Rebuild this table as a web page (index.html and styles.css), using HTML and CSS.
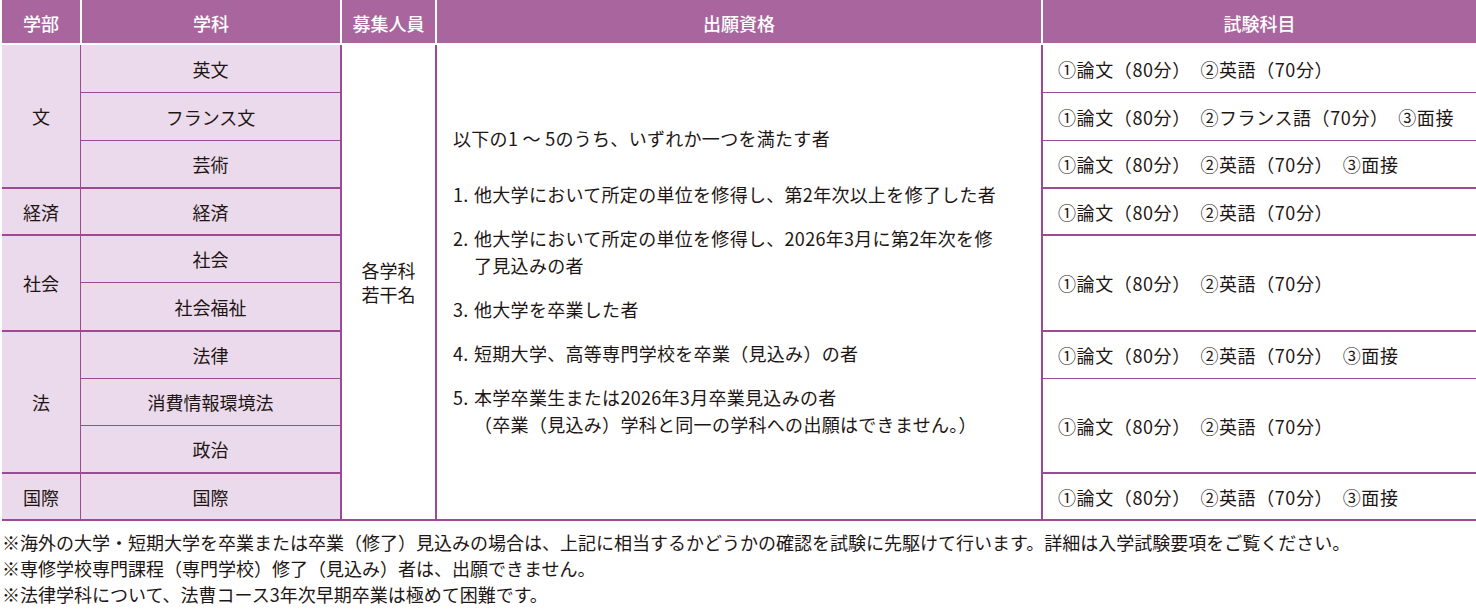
FILE: index.html
```html
<!DOCTYPE html>
<html lang="ja">
<head>
<meta charset="utf-8">
<title>出願資格</title>
<link rel="stylesheet" href="styles.css">
</head>
<body>
<div class="wrap">
  <div class="grid head">
    <div class="hc">学部</div>
    <div class="hc">学科</div>
    <div class="hc">募集人員</div>
    <div class="hc">出願資格</div>
    <div class="hc">試験科目</div>
  </div>
  <div class="grid tbody">
    <div class="cell c1 s3 grp">文</div>
    <div class="cell c2 thin">英文</div>
    <div class="cell c3 s10"><p class="quota">各学科<br>若干名</p></div>
    <div class="cell c4 s10">
      <div class="quals">
        <p class="intro">以下の1 ～ 5のうち、いずれか一つを満たす者</p>
        <p class="item"><span class="num">1.</span><span>他大学において所定の単位を修得し、第2年次以上を修了した者</span></p>
        <p class="item"><span class="num">2.</span><span>他大学において所定の単位を修得し、2026年3月に第2年次を修<br>了見込みの者</span></p>
        <p class="item"><span class="num">3.</span><span>他大学を卒業した者</span></p>
        <p class="item"><span class="num">4.</span><span>短期大学、高等専門学校を卒業（見込み）の者</span></p>
        <p class="item"><span class="num">5.</span><span>本学卒業生または2026年3月卒業見込みの者<br>（卒業（見込み）学科と同一の学科への出願はできません。）</span></p>
      </div>
    </div>
    <div class="cell c5 thin">①論文（80分）　②英語（70分）</div>

    <div class="cell c2 thin">フランス文</div>
    <div class="cell c5 thin">①論文（80分）　②フランス語（70分）　③面接</div>

    <div class="cell c2 grp">芸術</div>
    <div class="cell c5 grp">①論文（80分）　②英語（70分）　③面接</div>

    <div class="cell c1 grp">経済</div>
    <div class="cell c2 grp">経済</div>
    <div class="cell c5 grp">①論文（80分）　②英語（70分）</div>

    <div class="cell c1 s2 grp">社会</div>
    <div class="cell c2 thin">社会</div>
    <div class="cell c5 s2 grp">①論文（80分）　②英語（70分）</div>
    <div class="cell c2 grp">社会福祉</div>

    <div class="cell c1 s3 grp">法</div>
    <div class="cell c2 thin">法律</div>
    <div class="cell c5 thin">①論文（80分）　②英語（70分）　③面接</div>
    <div class="cell c2 thin">消費情報環境法</div>
    <div class="cell c5 s2 grp">①論文（80分）　②英語（70分）</div>
    <div class="cell c2 grp">政治</div>

    <div class="cell c1 grp">国際</div>
    <div class="cell c2 grp">国際</div>
    <div class="cell c5 grp">①論文（80分）　②英語（70分）　③面接</div>
  </div>
  <div class="notes">
    <p>※海外の大学・短期大学を卒業または卒業（修了）見込みの場合は、上記に相当するかどうかの確認を試験に先駆けて行います。詳細は入学試験要項をご覧ください。</p>
    <p>※専修学校専門課程（専門学校）修了（見込み）者は、出願できません。</p>
    <p>※法律学科について、法曹コース3年次早期卒業は極めて困難です。</p>
  </div>
</div>
</body>
</html>
```

FILE: styles.css
```css
html, body {
  margin: 0;
  background: #ffffff;
}
body {
  font-family: "Noto Sans CJK JP", "Noto Sans", sans-serif;
  color: #1e1614;
  font-size: 18px;
}
.wrap {
  padding-left: 2px;
}
.grid {
  display: grid;
  grid-template-columns: 78px 260px 95px 606px 435px;
}
.head {
  height: 43px;
  background: #a9669e;
}
.hc {
  display: flex;
  align-items: center;
  justify-content: center;
  padding-top: 3px;
  color: #ffffff;
  font-weight: 500;
  font-size: 18px;
  border-left: 2px solid #ffffff;
}
.hc:first-child {
  border-left: 0;
}
.tbody {
  margin-top: 2px;
  grid-template-rows: 48px 48px 48px 47px 47px 49px 47px 47px 48px 47px;
}
.cell {
  box-sizing: border-box;
  display: flex;
  align-items: center;
  justify-content: center;
  text-align: center;
  line-height: 24px;
}
.c1 { grid-column: 1; background: #ebdaeb; }
.c2 { grid-column: 2; background: #ebdaeb; border-left: 1px solid #9d4a93; }
.c3 { grid-column: 3; border-left: 2px solid #9d4a93; border-bottom: 2px solid #9d4a93; }
.quota {
  margin: 0;
  line-height: 24px;
}
.c4 {
  grid-column: 4;
  border-left: 2px solid #9d4a93;
  border-bottom: 2px solid #9d4a93;
  justify-content: flex-start;
  text-align: left;
  padding-left: 16px;
  letter-spacing: 0.3px;
}
.c5 {
  grid-column: 5;
  border-left: 2px solid #9d4a93;
  justify-content: flex-start;
  text-align: left;
  padding-left: 15px;
  letter-spacing: 0.6px;
}
.s2 { grid-row: span 2; }
.s3 { grid-row: span 3; }
.s10 { grid-row: span 10; }
.thin { border-bottom: 1px solid #9d4a93; }
.grp { border-bottom: 2px solid #9d4a93; }

.quals {
  line-height: 27px;
  padding-bottom: 2px;
}
.quals p {
  margin: 0;
}
.quals .intro {
  margin-bottom: 29px;
}
.quals .item {
  display: flex;
  margin-bottom: 17px;
}
.quals .item:last-child {
  margin-bottom: 0;
}
.num {
  flex: 0 0 21px;
}

.notes {
  margin-top: 8px;
  line-height: 26px;
}
.notes p {
  margin: 0;
}
```
